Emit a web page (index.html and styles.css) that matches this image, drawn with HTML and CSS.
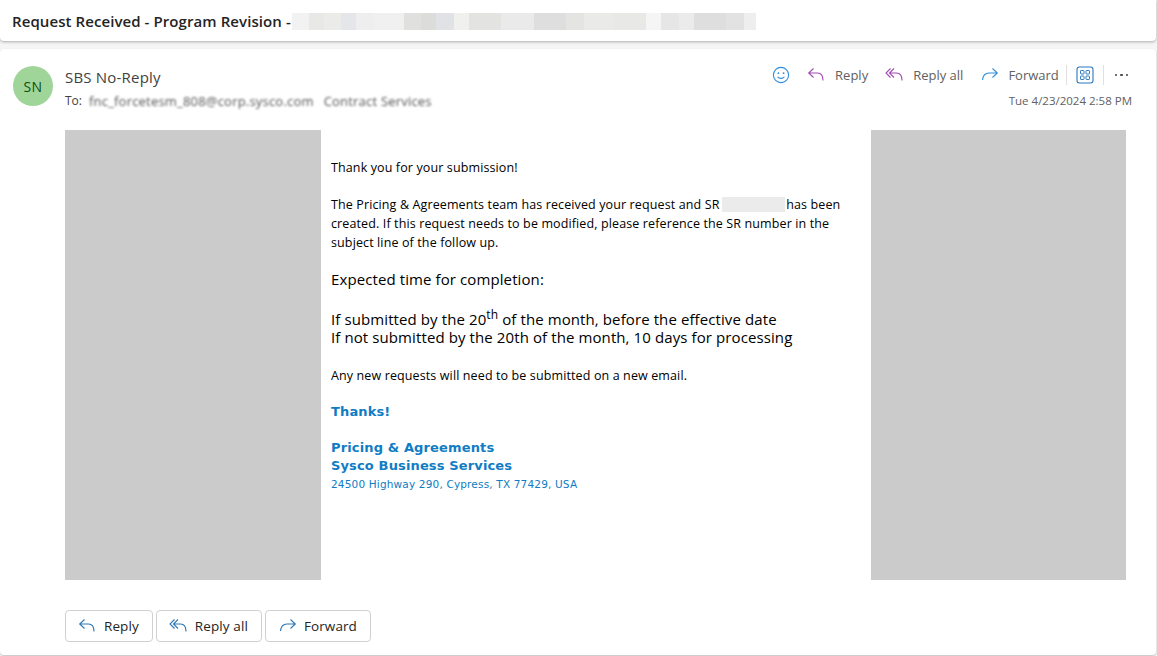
FILE: index.html
```html
<!DOCTYPE html>
<html lang="en">
<head>
<meta charset="utf-8">
<title>Request Received</title>
<link rel="stylesheet" href="styles.css">
</head>
<body>
<svg class="sprite" width="0" height="0" aria-hidden="true">
  <symbol id="i-reply" viewBox="0 0 20 20"><path d="M7.5 3.5 2.7 8l4.8 4.5M3 8h8.5c3.6 0 5.5 2.4 5.5 7.5" fill="none" stroke="currentColor" stroke-width="1.1"/></symbol>
  <symbol id="i-replyall" viewBox="0 0 20 20"><path d="M6.5 3.5 2 8l4.5 4.5M10 3.5 5.5 8l4.5 4.5M6 8h6.5c3.6 0 5.5 2.4 5.5 7.5" fill="none" stroke="currentColor" stroke-width="1.1"/></symbol>
  <symbol id="i-forward" viewBox="-1 0 20 20"><path d="M12.5 3.5 17.3 8l-4.8 4.5M17 8H9c-3.6 0-6 2.4-6.5 7" fill="none" stroke="currentColor" stroke-width="1.1"/></symbol>
</svg>
<header class="subject-card">
  <h1 class="subject">Request Received - Program Revision -</h1>
  <div class="redact-subject"></div>
</header>
<main class="message-card">
  <div class="message-head">
    <div class="avatar">SN</div>
    <div class="people">
      <div class="sender">SBS No-Reply</div>
      <div class="recipients"><span>To:</span><span class="blurred">fnc_forcetesm_808@corp.sysco.com</span><span class="blurred">Contract Services</span></div>
    </div>
    <div class="actions">
      <div class="toolbar">
        <svg class="emoji" width="18" height="18" viewBox="0 0 18 18"><circle cx="9" cy="9" r="7.6" fill="none" stroke="currentColor" stroke-width="1.1"/><circle cx="6.4" cy="7.2" r=".9" fill="currentColor"/><circle cx="11.6" cy="7.2" r=".9" fill="currentColor"/><path d="M5.6 10.8c1.6 2.1 5.2 2.1 6.8 0" fill="none" stroke="currentColor" stroke-width="1.1"/></svg>
        <button class="tool tool-reply"><svg class="ico purple"><use href="#i-reply"/></svg>Reply</button>
        <button class="tool tool-all"><svg class="ico purple"><use href="#i-replyall"/></svg>Reply all</button>
        <button class="tool tool-fwd"><svg class="ico blue"><use href="#i-forward"/></svg>Forward</button>
        <span class="sep"></span>
        <svg class="apps" width="18" height="18" viewBox="0 0 18 18"><rect x="1" y="1" width="16" height="16" rx="2.5" fill="none" stroke="currentColor" stroke-width="1.1"/><rect x="4.5" y="4.5" width="3.5" height="3.5" rx=".6" fill="none" stroke="currentColor"/><rect x="10" y="4.5" width="3.5" height="3.5" rx=".6" fill="none" stroke="currentColor"/><rect x="4.5" y="10" width="3.5" height="3.5" rx=".6" fill="none" stroke="currentColor"/><rect x="10" y="10" width="3.5" height="3.5" rx=".6" fill="none" stroke="currentColor"/></svg>
        <span class="sep"></span>
        <span class="more"><i></i><i></i><i></i></span>
      </div>
      <div class="date">Tue 4/23/2024 2:58 PM</div>
    </div>
  </div>
  <div class="mail">
    <div class="side"></div>
    <div class="content">
      <p class="small first">Thank you for your submission!</p>
      <p class="small para">The Pricing &amp; Agreements team has received your request and SR <span class="redact-sr"></span> has been<br>created. If this request needs to be modified, please reference the SR number in the<br>subject line of the follow up.</p>
      <p class="large expected">Expected time for completion:</p>
      <p class="large cond">If submitted by the 20<sup>th</sup> of the month, before the effective date<br>If not submitted by the 20th of the month, 10 days for processing</p>
      <p class="small anynew">Any new requests will need to be submitted on a new email.</p>
      <p class="sig thanks">Thanks!</p>
      <p class="sig team">Pricing &amp; Agreements<br>Sysco Business Services</p>
      <p class="address">24500 Highway 290, Cypress, TX 77429, USA</p>
    </div>
    <div class="side side-r"></div>
  </div>
  <div class="foot">
    <button class="foot-btn"><svg class="ico blue-dark"><use href="#i-reply"/></svg>Reply</button>
    <button class="foot-btn"><svg class="ico blue-dark"><use href="#i-replyall"/></svg>Reply all</button>
    <button class="foot-btn"><svg class="ico blue-dark"><use href="#i-forward"/></svg>Forward</button>
  </div>
</main>
</body>
</html>
```
FILE: styles.css
```css
* { box-sizing: border-box; }
html, body { height: 100%; }
body {
  margin: 0;
  background: #f5f5f5;
  font-family: "Open Sans", "Noto Sans", sans-serif;
  color: #242424;
  overflow: hidden;
}
.sprite { position: absolute; }
.subject-card {
  height: 41px;
  width: 1156px;
  background: #fff;
  border-radius: 0 0 4px 4px;
  box-shadow: 0 1px 3px rgba(0,0,0,.3);
  display: flex;
  align-items: center;
  padding: 0 0 0 12px;
}
.subject {
  margin: 0;
  font-size: 15px;
  font-weight: 600;
  letter-spacing: .08px;
  color: #242424;
  white-space: nowrap;
}
.redact-subject {
  width: 464px;
  height: 17px;
  margin-left: 1px;
  margin-top: 1px;
  background: linear-gradient(90deg,
    #f2f2f2 0 17px, #e8e8e6 17px 32px, #ebebe9 32px 49px, #e4e6e9 49px 64px,
    #eeeeee 64px 82px, #f0f0f0 82px 112px, #e0e0de 112px 129px, #dcdcda 129px 144px,
    #e0e2e5 144px 162px, #f0f0ee 162px 177px, #e3e3e1 177px 209px, #eaeaea 209px 242px,
    #dedede 242px 274px, #e4e4e2 274px 292px, #eaeae8 292px 322px, #e8e8e6 322px 354px,
    #f5f5f5 354px 369px, #e6e6e6 369px 387px, #ecebeb 387px 402px, #dedede 402px 434px,
    #e2e2e2 434px 452px, #eeeeee 452px 467px);
}
.message-card {
  margin-top: 8px;
  width: 1156px;
  height: 606px;
  background: #fff;
  border-radius: 4px;
  box-shadow: 0 1px 2px rgba(0,0,0,.22);
  padding: 17px 30px 0 13px;
}
.message-head { display: flex; height: 64px; }
.avatar {
  width: 40px; height: 40px;
  border-radius: 50%;
  background: #a0d59a;
  color: #0e4f0e;
  font-size: 14px;
  letter-spacing: .3px;
  display: flex; align-items: center; justify-content: center;
  flex: none;
}
.people { margin-left: 12px; flex: 1; }
.sender { font-size: 15px; line-height: 22px; color: #424242; letter-spacing: .2px; }
.recipients { display: flex; gap: 7px; font-size: 12px; line-height: 16px; margin-top: 5px; color: #424242; }
.blurred { filter: blur(1.2px); color: #555; font-size: 13px; letter-spacing: .2px; }
.blurred + .blurred { margin-left: 3px; }
.actions { width: 370px; margin-right: -6px; margin-top: -1px; display: flex; flex-direction: column; align-items: flex-end; }
.toolbar { display: flex; align-items: center; height: 20px; color: #616161; font-size: 13px; }
.tool {
  border: 0; background: none; padding: 0; font: inherit; color: inherit;
  display: flex; align-items: center;
}
.ico { width: 20px; height: 20px; margin-right: 9px; }
.purple { color: #a24ab3; }
.blue { color: #2e8fdc; }
.blue-dark { color: #2b78b8; }
.emoji { color: #2f8ddb; margin-right: 16px; }
.tool-reply, .tool-all { margin-right: 16px; }
.sep { width: 1px; height: 20px; background: #e0e0e0; }
.tool-fwd + .sep { margin-left: 7px; }
.apps { color: #2b79c2; margin: 0 9px; }
.more { display: flex; gap: 3px; margin-left: 11px; margin-right: 4px; }
.more i { width: 2.4px; height: 2.4px; background: #444; border-radius: 50%; }
.date { font-size: 11.5px; line-height: 16px; margin-top: 8px; color: #616161; }
.mail { display: flex; margin-left: 52px; height: 450px; }
.side { width: 256px; background: #cbcbcb; flex: none; }
.side-r { width: 255px; }
.content { width: 550px; padding: 28px 0 0 10px; color: #000; }
.content p { margin: 0; }
.small { font-size: 12.5px; line-height: 19px; letter-spacing: .12px; }
.large { font-size: 15px; line-height: 18px; letter-spacing: .1px; }
.content .para { margin-top: 18px; }
.content .expected { margin-top: 18px; }
.content .cond { margin-top: 22px; }
.cond sup { font-size: 12px; line-height: 0; }
.content .anynew { margin-top: 20px; }
.sig { font-family: "DejaVu Sans", Verdana, sans-serif; font-weight: 700; font-size: 13px; line-height: 18px; letter-spacing: .14px; color: #0f7cc4; }
.content .thanks { margin-top: 18px; }
.content .team { margin-top: 18px; }
.address { font-family: "DejaVu Sans", Verdana, sans-serif; font-size: 10.5px; line-height: 18px; letter-spacing: .17px; color: #0f7cc4; }
.redact-sr { display: inline-block; width: 63px; height: 15px; margin: 0 -2px 0 -1px; vertical-align: -3px; background: #ebebeb; }
.foot { display: flex; gap: 3px; margin: 30px 0 0 52px; }
.foot-btn {
  height: 32px;
  border: 1px solid #d1d1d1;
  border-radius: 4px;
  background: #fff;
  font: inherit;
  font-size: 13.5px;
  font-weight: 500;
  color: #242424;
  letter-spacing: .1px;
  display: flex; align-items: center;
  padding: 0 13px 0 11px;
}
.foot-btn .ico { margin-right: 7px; }
```
